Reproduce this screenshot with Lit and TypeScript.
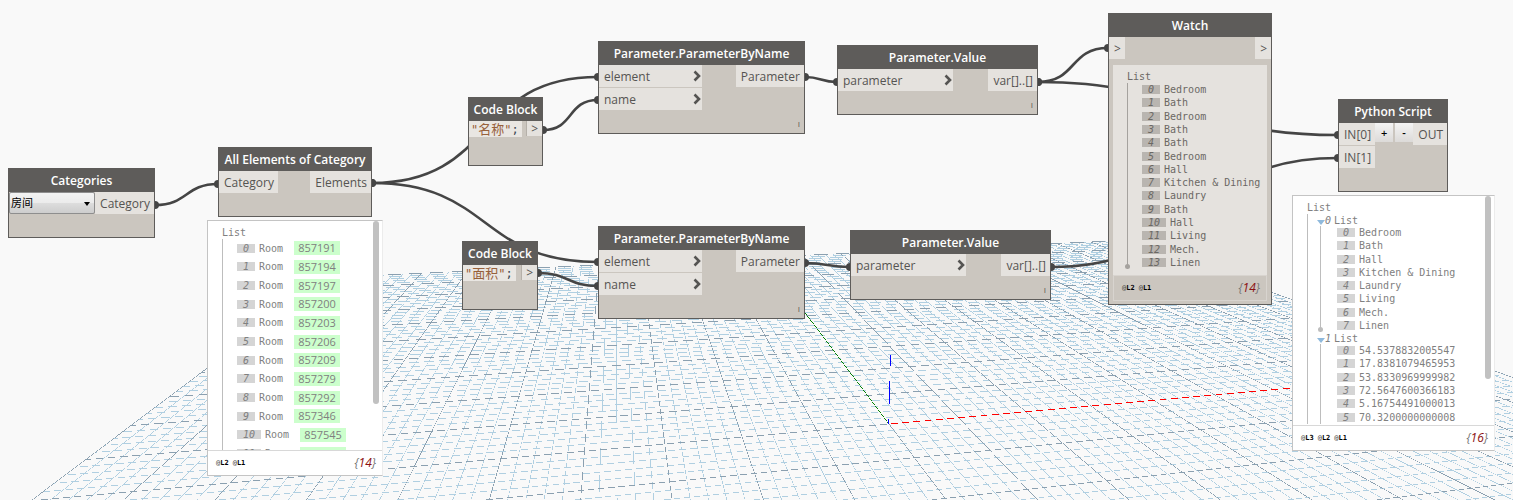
import { LitElement, html, svg, css, nothing } from "lit";
import { customElement, property } from "lit/decorators.js";
import { styleMap } from "lit/directives/style-map.js";

type Pt = [number, number];

/* Perspective of the ground plane: origin and the two vanishing points. */
const ORIGIN: Pt = [889, 424];
const VANISH_X: Pt = [4950, 61];
const VANISH_Y: Pt = [615, 61];
const HALF_X = 0.1744;
const HALF_Y = 0.85;
const NEAR = 0.4;
const STEPS = 50;
const THICKNESS = 0.62;

const project = (s: number, t: number): Pt => {
  const w = 1 + s + t;
  return [
    (ORIGIN[0] + s * VANISH_X[0] + t * VANISH_Y[0]) / w,
    (ORIGIN[1] + s * VANISH_X[1] + t * VANISH_Y[1]) / w,
  ];
};

/* A line thinner than a pixel, as a filled quad: without anti-aliasing it breaks up into dashes. */
const quad = (a: Pt, b: Pt) => {
  const len = Math.hypot(b[0] - a[0], b[1] - a[1]);
  const nx = (-(b[1] - a[1]) / len) * (THICKNESS / 2);
  const ny = ((b[0] - a[0]) / len) * (THICKNESS / 2);
  const p = (x: number, y: number) => `${x.toFixed(3)} ${y.toFixed(3)}`;
  return `M${p(a[0] + nx, a[1] + ny)}L${p(b[0] + nx, b[1] + ny)}L${p(b[0] - nx, b[1] - ny)}L${p(a[0] - nx, a[1] - ny)}Z`;
};

const gridPaths = () => {
  const minor: string[] = [];
  const major: string[] = [];
  for (let i = -STEPS; i <= STEPS; i++) {
    const s = (i / STEPS) * HALF_X;
    const t = (i / STEPS) * HALF_Y;
    const target = i % 5 === 0 ? major : minor;
    target.push(quad(project(s, Math.max(-HALF_Y, NEAR - 1 - s)), project(s, HALF_Y)));
    const start = Math.max(-HALF_X, NEAR - 1 - t);
    if (start < HALF_X) target.push(quad(project(start, t), project(HALF_X, t)));
  }
  return { minor, major };
};

const GRID = gridPaths();

/* Output point and input point of every connector. */
const WIRES: [Pt, Pt][] = [
  [[155, 205], [218, 184]],
  [[372, 183], [598, 77]],
  [[372, 183], [598, 262]],
  [[543, 130], [598, 100]],
  [[538, 273], [598, 286]],
  [[805, 77], [837, 82]],
  [[805, 263], [850, 267]],
  [[1038, 82], [1108, 48]],
  [[1038, 82], [1338, 135]],
  [[1051, 267], [1338, 158]],
];

const wirePath = ([a, b]: [Pt, Pt]) => {
  const k = Math.hypot(b[0] - a[0], b[1] - a[1]) / 2;
  return `M${a[0]} ${a[1]}C${a[0] + k} ${a[1]} ${b[0] - k} ${b[1]} ${b[0]} ${b[1]}`;
};

@customElement("ground-grid")
export class GroundGrid extends LitElement {
  static styles = css`
    :host { display: block; }
    .plane { display: block; width: 100%; height: 100%; shape-rendering: crispEdges; }
    .minor { fill: #b0cfe1; }
    .major { fill: #8ba0b0; }
    .x { fill: #f00; }
    .y { fill: #008000; }
    .z { fill: #00f; }
  `;
  render() {
    return html`<svg class="plane" aria-hidden="true">
      ${GRID.minor.map((d) => svg`<path class="minor" d=${d} />`)}
      ${GRID.major.map((d) => svg`<path class="major" d=${d} />`)}
      <path class="x" d=${quad(ORIGIN, project(HALF_X, 0))} />
      <path class="y" d=${quad(ORIGIN, project(0, HALF_Y))} />
      <path class="z" d="M890 355h1v11h-1zM889 381h1v23h-1zM888 419h1v5h-1z" />
    </svg>`;
  }
}

@customElement("wire-layer")
export class WireLayer extends LitElement {
  static styles = css`
    :host { display: block; }
    .layer { display: block; width: 100%; height: 100%; }
    .wire { fill: none; stroke: #454545; stroke-width: 2.6; }
    .plug { fill: #454545; }
  `;
  render() {
    return html`<svg class="layer" aria-hidden="true">
      ${WIRES.map(
        (w) => svg`<path class="wire" d=${wirePath(w)} />
          <circle class="plug" cx=${w[0][0]} cy=${w[0][1]} r="4" />
          <circle class="plug" cx=${w[1][0]} cy=${w[1][1]} r="4" />`
      )}
    </svg>`;
  }
}

interface Item { text: string; id?: string }
interface Group { label?: string; items: Item[]; end?: boolean }

@customElement("value-tree")
export class ValueTree extends LitElement {
  @property({ attribute: false }) groups: Group[] = [];
  @property({ type: Number }) pitch = 13;
  static styles = css`
    :host {
      display: block;
      font: 10px/13px "DejaVu Sans Mono", "Liberation Mono", monospace;
      color: var(--tree-text, #808080);
    }
    .root { height: 13px; }
    .branch { border-left: 1px solid var(--tree-line, #bdbdbd); }
    .nested { padding-left: 12px; }
    .head { display: flex; align-items: center; height: 12px; }
    .arrow { width: 8px; height: 5px; margin-left: -3px; margin-top: 4px; fill: #8fb9dc; }
    .key { width: 9px; font-style: italic; }
    .rows {
      position: relative;
      display: grid;
      grid-auto-rows: 1fr;
      padding: 0 0 0 14px;
      margin: 0;
      list-style: none;
    }
    .inner { border-left: 1px solid var(--tree-line, #bdbdbd); padding-left: 16px; }
    .end::after {
      content: "";
      position: absolute;
      left: -3px;
      bottom: 0;
      width: 5px;
      height: 5px;
      border-radius: 50%;
      background: var(--tree-line, #bdbdbd);
    }
    .row { display: flex; align-items: center; min-height: 0; white-space: pre; }
    .index {
      padding: 0 6px;
      height: 9px;
      line-height: 9px;
      margin-right: 4px;
      font-style: italic;
      background: var(--tree-tag, #d5d5d5);
    }
    .id {
      margin-left: 11px;
      padding: 0 4px;
      font: 11px/14px "Open Sans", sans-serif;
      background: #ccffcc;
    }
  `;
  private rows(g: Group, inner: boolean) {
    const height = `${Math.round(g.items.length * this.pitch)}px`;
    return html`<ul
      class="rows ${inner ? "inner" : ""} ${g.end ? "end" : ""}"
      style=${styleMap({ height })}
    >
      ${g.items.map(
        (it, i) => html`<li class="row"><span class="index">${i}</span><span>${it.text}</span>${it.id ? html`<span class="id">${it.id}</span>` : nothing}</li>`
      )}
    </ul>`;
  }
  render() {
    return html`<div class="root">List</div>
      <div class="branch">
        ${this.groups.map((g) =>
          g.label === undefined
            ? this.rows(g, false)
            : html`<div class="nested">
                <div class="head">
                  <svg class="arrow" viewBox="0 0 8 5"><path d="M0 0H8L4 5Z" /></svg>
                  <span class="key">${g.label}</span><span>List</span>
                </div>
                ${this.rows(g, true)}
              </div>`
        )}
      </div>`;
  }
}

@customElement("level-bar")
export class LevelBar extends LitElement {
  @property({ attribute: false }) levels: string[] = [];
  @property({ type: Number }) count = 0;
  static styles = css`
    :host { display: flex; justify-content: space-between; align-items: center; height: 24px; padding: 0 6px 0 8px; }
    .levels { display: flex; gap: 4px; font: 7px/10px "DejaVu Sans Mono", monospace; color: #444; }
    .level { font-weight: 700; color: #000; }
    .count { font: italic 12px/14px "Open Sans", sans-serif; color: #777; }
    .number { color: #8c1010; }
  `;
  render() {
    return html`<span class="levels">${this.levels.map((l) => html`<span>@<span class="level">${l}</span></span>`)}</span>
      <span class="count">{<span class="number">${this.count}</span>}</span>`;
  }
}

@customElement("preview-panel")
export class PreviewPanel extends LitElement {
  static styles = css`
    :host {
      display: flex;
      flex-direction: column;
      box-sizing: border-box;
      background: #fff;
      border: 1px solid #c4c4c4;
      border-right-color: #ececec;
    }
    .view { position: relative; flex: 1; min-height: 0; overflow: hidden; padding: 5px 14px 0; }
    .bar { position: absolute; top: 0; right: 3px; width: 6px; height: 80%; border-radius: 3px; background: #c1c1c1; }
    .foot { border-top: 1px solid #d8d8d8; }
  `;
  render() {
    return html`<div class="view"><slot></slot><div class="bar"></div></div>
      <div class="foot"><slot name="foot"></slot></div>`;
  }
}

@customElement("graph-node")
export class GraphNode extends LitElement {
  @property() heading = "";
  @property({ attribute: false }) inputs: string[] = [];
  @property({ attribute: false }) outputs: string[] = [];
  @property({ type: Boolean }) listed = false;
  @property({ type: Boolean }) laced = false;
  static styles = css`
    :host {
      display: block;
      box-sizing: border-box;
      border: 1px solid #5e5c5a;
      background: #cbc6bf;
      font: 12px/20px "Open Sans", "Noto Sans CJK SC", sans-serif;
      color: #555452;
    }
    .title {
      margin: -1px -1px 0;
      padding-top: 1px;
      height: 23px;
      line-height: 24px;
      font-size: 12px;
      font-weight: 600;
      text-align: center;
      white-space: nowrap;
      color: #fff;
      background: #5e5c5a;
    }
    .body { display: flex; align-items: flex-start; }
    .ports { display: grid; gap: 1px; }
    .outs { margin-left: auto; }
    .port {
      display: flex;
      align-items: center;
      justify-content: space-between;
      height: 20px;
      padding: 2px 4px 0 5px;
      background: #e5e2de;
      white-space: nowrap;
    }
    .wide { width: var(--port-width, 97px); padding-right: 1px; }
    .chevron { width: 9px; height: 12px; margin-top: -2px; fill: none; stroke: #555452; stroke-width: 2.6; }
    .foot { display: flex; justify-content: flex-end; align-items: flex-end; height: 23px; padding-right: 4px; }
    .lacing { font: 8px/18px "Open Sans", sans-serif; color: #5d524c; }
  `;
  render() {
    return html`<div class="title">${this.heading}</div>
      <div class="body">
        ${this.inputs.length
          ? html`<div class="ports">
              ${this.inputs.map(
                (p) => html`<div class="port ${this.listed ? "wide" : ""}"><span>${p}</span>${this.listed
                    ? html`<svg class="chevron" viewBox="0 0 9 12"><path d="M2.5 1.5L7 6L2.5 10.5" /></svg>`
                    : nothing}</div>`
              )}
            </div>`
          : nothing}
        <slot name="control"></slot>
        ${this.outputs.length
          ? html`<div class="ports outs">${this.outputs.map((p) => html`<div class="port">${p}</div>`)}</div>`
          : nothing}
      </div>
      <slot name="content"><div class="foot">${this.laced ? html`<span class="lacing">I</span>` : nothing}</div></slot>`;
  }
}

const ROOM_IDS = ["857191", "857194", "857197", "857200", "857203", "857206", "857209", "857279", "857292", "857346", "857545", "857548"];
const WATCHED = ["Bedroom", "Bath", "Bedroom", "Bath", "Bath", "Bedroom", "Hall", "Kitchen & Dining", "Laundry", "Bath", "Hall", "Living", "Mech.", "Linen"];
const NAMES = ["Bedroom", "Bath", "Hall", "Kitchen & Dining", "Laundry", "Living", "Mech.", "Linen"];
const AREAS = ["54.5378832005547", "17.8381079465953", "53.8330969999982", "72.5647600366183", "5.16754491000013", "70.3200000000008"];
const items = (list: string[]): Item[] => list.map((text) => ({ text }));

@customElement("app-root")
export class AppRoot extends LitElement {
  static styles = css`
    :host { display: block; }
    .canvas { position: relative; height: 100vh; overflow: hidden; background: #f9f9f9; }
    .fill { position: absolute; inset: 0; }
    .item { position: absolute; }
    .categories { left: 8px; top: 168px; width: 147px; }
    .elements { left: 218px; top: 147px; width: 154px; }
    .elements-preview { left: 207px; top: 220px; width: 176px; height: 256px; }
    .code-name { left: 468px; top: 97px; width: 75px; }
    .code-area { left: 462px; top: 241px; width: 76px; }
    .by-name-a { left: 598px; top: 41px; width: 207px; }
    .by-name-b { left: 598px; top: 226px; width: 207px; }
    .value-a { left: 837px; top: 45px; width: 201px; --port-width: 109px; }
    .value-b { left: 850px; top: 230px; width: 201px; --port-width: 109px; }
    .watch { left: 1108px; top: 13px; width: 164px; }
    .python { left: 1338px; top: 99px; width: 110px; }
    .python-preview { left: 1292px; top: 195px; width: 203px; height: 256px; }
    .combo { position: relative; display: block; width: 88px; height: 22px; }
    .select {
      appearance: none;
      display: block;
      box-sizing: border-box;
      width: 100%;
      height: 22px;
      margin: 0;
      padding: 0 14px 2px 1px;
      border: 1px solid #8e8e8e;
      border-radius: 2px;
      background: linear-gradient(#f3f3f3, #ebebeb 50%, #dddddd 50%, #cdcdcd);
      font: 11px/16px "Noto Sans CJK SC", sans-serif;
      color: #000;
    }
    .caret { position: absolute; right: 5px; top: 10px; width: 6px; height: 4px; pointer-events: none; }
    .code-control { flex: 1; padding-bottom: 5px; }
    .code-row { display: flex; justify-content: space-between; }
    .code {
      display: flex;
      align-items: center;
      height: 16px;
      padding: 0 3px 0 2px;
      background: #e9e6e2;
      font: 12px/16px "DejaVu Sans Mono", "Noto Sans CJK SC", monospace;
      color: #3d4a55;
      white-space: nowrap;
    }
    .string { color: #97603a; }
    .hanzi { font-size: 13px; font-family: "Noto Sans CJK SC", sans-serif; }
    .code-out { padding: 0 4px; height: 15px; line-height: 15px; background: #e5e2de; border-left: 1px solid #b5b0a9; }
    .tools { display: flex; gap: 2px; }
    .tool {
      width: 18px;
      height: 19px;
      padding: 0;
      border: 0;
      background: linear-gradient(#f4f4f4, #dcdad8);
      font: 600 11px/16px "Open Sans", sans-serif;
      color: #000;
    }
    .watch-body {
      margin: 6px 4px 3px;
      --tree-text: #6b6864;
      --tree-tag: #b9b5b0;
      --tree-line: #a5a29e;
    }
    .watch-list { padding: 5px 14px 6px; background: #e5e2de; }
    .watch-foot { border: 1px solid #d8d4cf; }
  `;
  private codeBlock(place: string, word: string) {
    return html`<graph-node class="item ${place}" heading="Code Block">
      <div slot="control" class="code-control">
        <div class="code-row">
          <div class="code"><span class="string">"<span class="hanzi">${word}</span>"</span>;</div>
          <div class="code-out">&gt;</div>
        </div>
      </div>
    </graph-node>`;
  }
  render() {
    const rooms: Group[] = [{ items: ROOM_IDS.map((id) => ({ text: "Room", id })) }];
    const watched: Group[] = [{ items: items(WATCHED), end: true }];
    const result: Group[] = [
      { label: "0", items: items(NAMES), end: true },
      { label: "1", items: items(AREAS) },
    ];
    return html`<main class="canvas">
      <ground-grid class="fill"></ground-grid>
      <wire-layer class="fill"></wire-layer>

      <graph-node class="item categories" heading="Categories" .outputs=${["Category"]}>
        <label slot="control" class="combo">
          <select class="select" aria-label="Categories"><option>房间</option></select>
          <svg class="caret" viewBox="0 0 6 4"><path d="M0 0H6L3 4Z" /></svg>
        </label>
      </graph-node>

      <graph-node class="item elements" heading="All Elements of Category" .inputs=${["Category"]} .outputs=${["Elements"]}></graph-node>
      <preview-panel class="item elements-preview">
        <value-tree .groups=${rooms} .pitch=${56 / 3}></value-tree>
        <level-bar slot="foot" .levels=${["L2", "L1"]} .count=${14}></level-bar>
      </preview-panel>

      ${this.codeBlock("code-name", "名称")} ${this.codeBlock("code-area", "面积")}

      <graph-node class="item by-name-a" heading="Parameter.ParameterByName" listed laced .inputs=${["element", "name"]} .outputs=${["Parameter"]}></graph-node>
      <graph-node class="item by-name-b" heading="Parameter.ParameterByName" listed laced .inputs=${["element", "name"]} .outputs=${["Parameter"]}></graph-node>
      <graph-node class="item value-a" heading="Parameter.Value" listed laced .inputs=${["parameter"]} .outputs=${["var[]..[]"]}></graph-node>
      <graph-node class="item value-b" heading="Parameter.Value" listed laced .inputs=${["parameter"]} .outputs=${["var[]..[]"]}></graph-node>

      <graph-node class="item watch" heading="Watch" .inputs=${[">"]} .outputs=${[">"]}>
        <div slot="content" class="watch-body">
          <div class="watch-list"><value-tree .groups=${watched} .pitch=${53 / 4}></value-tree></div>
          <div class="watch-foot"><level-bar .levels=${["L2", "L1"]} .count=${14}></level-bar></div>
        </div>
      </graph-node>

      <graph-node class="item python" heading="Python Script" .inputs=${["IN[0]", "IN[1]"]} .outputs=${["OUT"]}>
        <div slot="control" class="tools">
          <button class="tool" type="button" aria-label="Add input">+</button>
          <button class="tool" type="button" aria-label="Remove input">-</button>
        </div>
      </graph-node>
      <preview-panel class="item python-preview">
        <value-tree .groups=${result} .pitch=${53 / 4}></value-tree>
        <level-bar slot="foot" .levels=${["L3", "L2", "L1"]} .count=${16}></level-bar>
      </preview-panel>
    </main>`;
  }
}
